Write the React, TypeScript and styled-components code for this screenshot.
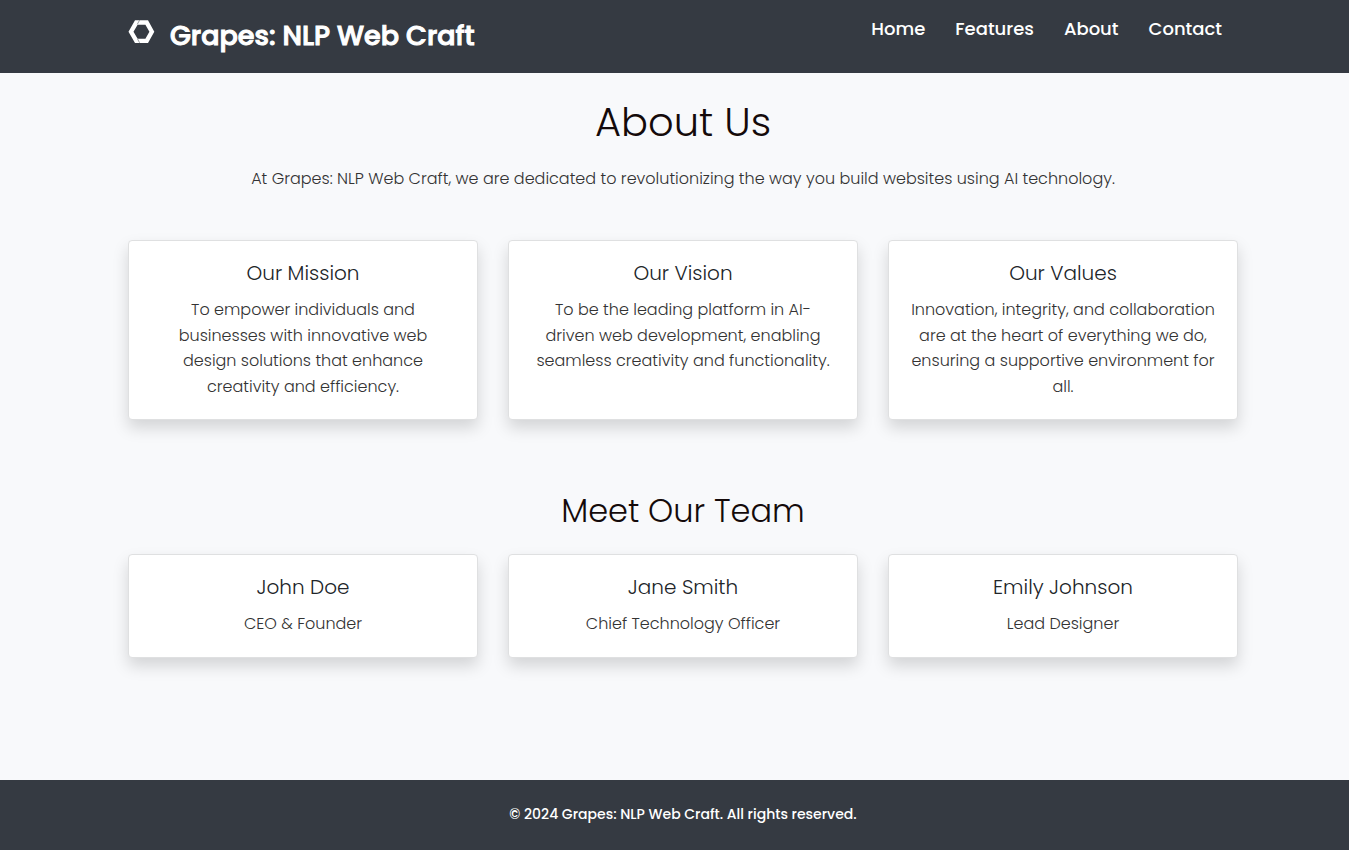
import React from "react";
import styled, { createGlobalStyle } from "styled-components";

const GlobalStyle = createGlobalStyle`
  *, *::before, *::after { box-sizing: border-box; }
  body {
    margin: 0;
    background: #f8f9fb;
    color: #333;
    font-family: Poppins, Inter, "Open Sans", sans-serif;
    font-size: 16px;
    font-weight: 300;
    line-height: 1.6;
  }
  h1, h2, h3, p { margin: 0; }
`;

const Page = styled.div`
  display: flex;
  flex-direction: column;
  min-height: 100vh;
`;

const Container = styled.div`
  width: 100%;
  max-width: 1110px;
  margin: 0 auto;
`;

const Band = styled.div`
  padding: 0 16px 0 33px;
`;

const Header = styled(Band).attrs({ as: "header" })`
  background: #353a42;
  padding-top: 12px;
  padding-bottom: 12px;
`;

const HeaderRow = styled(Container)`
  display: flex;
  justify-content: space-between;
  align-items: flex-start;
  min-height: 49px;
`;

const Brand = styled.a`
  display: flex;
  align-items: flex-start;
  gap: 15px;
  color: #fff;
  text-decoration: none;
  font-size: 27px;
  font-weight: 500;
  line-height: 48px;
  white-space: nowrap;
  -webkit-text-stroke: 1px #fff;
`;

const Logo = styled.svg`
  width: 27px;
  height: 24px;
  margin-top: 8px;
`;

const Nav = styled.nav`
  display: flex;
  gap: 30px;
  padding: 3px 16px;
`;

const NavLink = styled.a`
  color: #fff;
  text-decoration: none;
  font-size: 18px;
  font-weight: 500;
  line-height: 27px;
`;

const Main = styled(Band).attrs({ as: "main" })`
  flex: 1;
  padding-top: 25px;
  text-align: center;
`;

const PageTitle = styled.h1`
  color: #140a0a;
  font-size: 40px;
  font-weight: 300;
  line-height: 48px;
`;

const Lead = styled.p`
  margin-top: 20px;
  line-height: 26px;
`;

const SectionTitle = styled.h2`
  margin-top: 72px;
  color: #140a0a;
  font-size: 32px;
  font-weight: 300;
  line-height: 38px;
`;

const Cards = styled.div<{ $gap: number }>`
  display: grid;
  grid-template-columns: repeat(3, minmax(0, 1fr));
  gap: 30px;
  margin-top: ${(p) => p.$gap}px;
`;

const Card = styled.article`
  padding: 20px;
  background: #fff;
  border: 1px solid #dfe0e1;
  border-radius: 4px;
  box-shadow: 0 8px 16px rgba(0, 0, 0, 0.15);
`;

const CardTitle = styled.h3`
  color: #212529;
  font-size: 20px;
  font-weight: 300;
  line-height: 24px;
`;

const CardText = styled.p`
  margin-top: 12px;
  line-height: 1.6;
  white-space: pre-line;
`;

const Footer = styled(Band).attrs({ as: "footer" })`
  padding-top: 23px;
  padding-bottom: 25px;
  background: #353a42;
  color: #fff;
  font-size: 14px;
  font-weight: 500;
  line-height: 22px;
  text-align: center;
`;

const values = [
  {
    title: "Our Mission",
    text: "To empower individuals and businesses with innovative web\ndesign solutions that enhance creativity and efficiency.",
  },
  {
    title: "Our Vision",
    text: "To be the leading platform in AI-\ndriven web development, enabling seamless creativity and functionality.",
  },
  {
    title: "Our Values",
    text: "Innovation, integrity, and collaboration are at the heart of everything we do, ensuring a supportive environment for all.",
  },
];

const team = [
  { title: "John Doe", text: "CEO & Founder" },
  { title: "Jane Smith", text: "Chief Technology Officer" },
  { title: "Emily Johnson", text: "Lead Designer" },
];

const CardRow = ({ items, gap }: { items: typeof team; gap: number }) => (
  <Cards $gap={gap}>
    {items.map((item) => (
      <Card key={item.title}>
        <CardTitle>{item.title}</CardTitle>
        <CardText>{item.text}</CardText>
      </Card>
    ))}
  </Cards>
);

export default function App() {
  return (
    <Page>
      <GlobalStyle />
      <Header>
        <HeaderRow>
          <Brand href="#home">
            <Logo viewBox="0 0 27 24" aria-hidden="true">
              <path
                fill="#fff"
                fillRule="evenodd"
                d="M7 0.3H20L26.3 11.8L20 23H7L0.5 11.8ZM9.6 4.7L5.5 11.8L9.6 18.8H17.4L21.4 11.8L17.4 4.7Z"
              />
              <path d="M11.5 0.3L9.3 4.3M9.6 19L11.6 22.8" stroke="#353a42" strokeWidth="0.5" />
            </Logo>
            <span>Grapes: NLP Web Craft</span>
          </Brand>
          <Nav>
            <NavLink href="#home">Home</NavLink>
            <NavLink href="#features">Features</NavLink>
            <NavLink href="#about">About</NavLink>
            <NavLink href="#contact">Contact</NavLink>
          </Nav>
        </HeaderRow>
      </Header>
      <Main>
        <Container>
          <PageTitle>About Us</PageTitle>
          <Lead>
            At Grapes: NLP Web Craft, we are dedicated to revolutionizing the way you build websites using AI
            technology.
          </Lead>
          <CardRow items={values} gap={48} />
          <SectionTitle>Meet Our Team</SectionTitle>
          <CardRow items={team} gap={24} />
        </Container>
      </Main>
      <Footer>
        <p>© 2024 Grapes: NLP Web Craft. All rights reserved.</p>
      </Footer>
    </Page>
  );
}
